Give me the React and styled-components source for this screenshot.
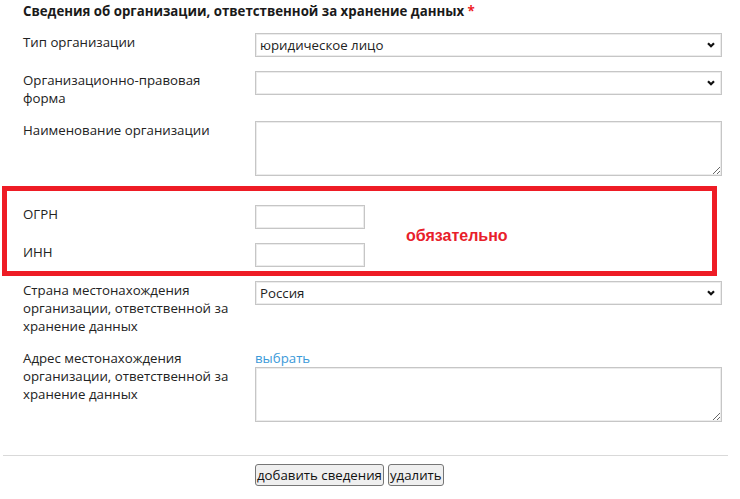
import React from "react";
import styled, { createGlobalStyle } from "styled-components";

const Global = createGlobalStyle`
  html, body { margin: 0; padding: 0; background: #fff; }
  body { font-family: "Open Sans", "Noto Sans", sans-serif; font-size: 13.25px; color: #222; }
  * { box-sizing: border-box; }
`;

const Page = styled.div`
  position: relative;
  width: 740px;
  height: 499px;
  padding: 2px 12px 0 3px;
  overflow: hidden;
`;

const Fields = styled.div`
  padding: 0 6px 0 20px;
`;

const Title = styled.div`
  font-weight: 700;
  line-height: 18px;
  margin-bottom: 13px;
  color: #1a1a1a;
`;

const Star = styled.span`
  color: #ee1c25;
`;

const Row = styled.div`
  display: flex;
  align-items: flex-start;
  margin-bottom: ${(p) => p.$gap ?? 14}px;
`;

const Label = styled.div`
  width: 232px;
  padding-right: 14px;
  line-height: 18px;
  color: #222;
  flex: none;
`;

const Control = styled.div`
  flex: 1;
  display: flex;
  flex-direction: column;
  min-width: 0;
`;

const Select = styled.select`
  appearance: none;
  -webkit-appearance: none;
  width: 100%;
  height: 24px;
  padding: 0 20px 0 4px;
  font-family: "Open Sans", "Noto Sans", sans-serif;
  font-size: 13.25px;
  color: #222;
  background-color: #fff;
  background-image: url("data:image/svg+xml;utf8,<svg xmlns='http://www.w3.org/2000/svg' width='8' height='6' viewBox='0 0 8 6'><path d='M1 1.2 L4 4.2 L7 1.2' fill='none' stroke='%23111' stroke-width='2.2'/></svg>");
  background-repeat: no-repeat;
  background-position: right 6px center;
  border: 1px solid #c6c6c6;
  box-shadow: inset 0 0 0 1px #ececec;
  border-radius: 0;
  outline: none;
`;

const TextArea = styled.textarea`
  display: block;
  width: 100%;
  height: 55px;
  padding: 2px 4px;
  font-family: "Open Sans", "Noto Sans", sans-serif;
  font-size: 13px;
  border: 1px solid #c6c6c6;
  box-shadow: inset 0 0 0 1px #ececec;
  border-radius: 0;
  resize: both;
  outline: none;
`;

const TextInput = styled.input`
  display: block;
  width: 110px;
  height: 24px;
  padding: 0 4px;
  font-family: "Open Sans", "Noto Sans", sans-serif;
  font-size: 13px;
  border: 1px solid #c6c6c6;
  box-shadow: inset 0 0 0 1px #ececec;
  border-radius: 0;
  outline: none;
`;

const Link = styled.a`
  color: #3b9ad9;
  line-height: 18px;
  text-decoration: none;
  cursor: pointer;
`;

const Divider = styled.hr`
  margin: 33px 0 8px 0;
  border: none;
  border-top: 1px solid #d9d9d9;
  height: 0;
`;

const Buttons = styled.div`
  display: flex;
  gap: 4px;
  padding-left: 252px;
`;

const Button = styled.button`
  font-family: "Open Sans", "Noto Sans", sans-serif;
  font-size: 13.25px;
  line-height: 18px;
  color: #111;
  background: #efefef;
  border: 1px solid #767676;
  border-radius: 3px;
  padding: 1px 1px;
  cursor: pointer;
`;

const Highlight = styled.div`
  position: absolute;
  left: 2px;
  top: 186px;
  width: 715px;
  height: 90px;
  border: 5px solid #ee1c25;
  pointer-events: none;
`;

const Required = styled.div`
  position: absolute;
  left: 406px;
  top: 227px;
  font-family: "Liberation Sans", Arial, sans-serif;
  font-weight: 700;
  font-size: 16px;
  line-height: 18px;
  color: #e8202a;
`;

export default function App() {
  return (
    <>
      <Global />
      <Page>
        <Fields>
          <Title>
            Сведения об организации, ответственной за хранение данных <Star>*</Star>
          </Title>
          <Row>
            <Label>Тип организации</Label>
            <Control>
              <Select defaultValue="ul">
                <option value="ul">юридическое лицо</option>
                <option value="ip">индивидуальный предприниматель</option>
              </Select>
            </Control>
          </Row>
          <Row>
            <Label>Организационно-правовая форма</Label>
            <Control>
              <Select defaultValue="">
                <option value=""></option>
              </Select>
            </Control>
          </Row>
          <Row $gap={29}>
            <Label>Наименование организации</Label>
            <Control>
              <TextArea />
            </Control>
          </Row>
          <Row>
            <Label>ОГРН</Label>
            <Control>
              <TextInput />
            </Control>
          </Row>
          <Row>
            <Label>ИНН</Label>
            <Control>
              <TextInput />
            </Control>
          </Row>
          <Row>
            <Label>Страна местонахождения организации, ответственной за хранение данных</Label>
            <Control>
              <Select defaultValue="ru">
                <option value="ru">Россия</option>
              </Select>
            </Control>
          </Row>
          <Row $gap={0}>
            <Label>Адрес местонахождения организации, ответственной за хранение данных</Label>
            <Control>
              <Link>выбрать</Link>
              <TextArea />
            </Control>
          </Row>
        </Fields>
        <Divider />
        <Buttons>
          <Button>добавить сведения</Button>
          <Button>удалить</Button>
        </Buttons>
        <Highlight />
        <Required>обязательно</Required>
      </Page>
    </>
  );
}
